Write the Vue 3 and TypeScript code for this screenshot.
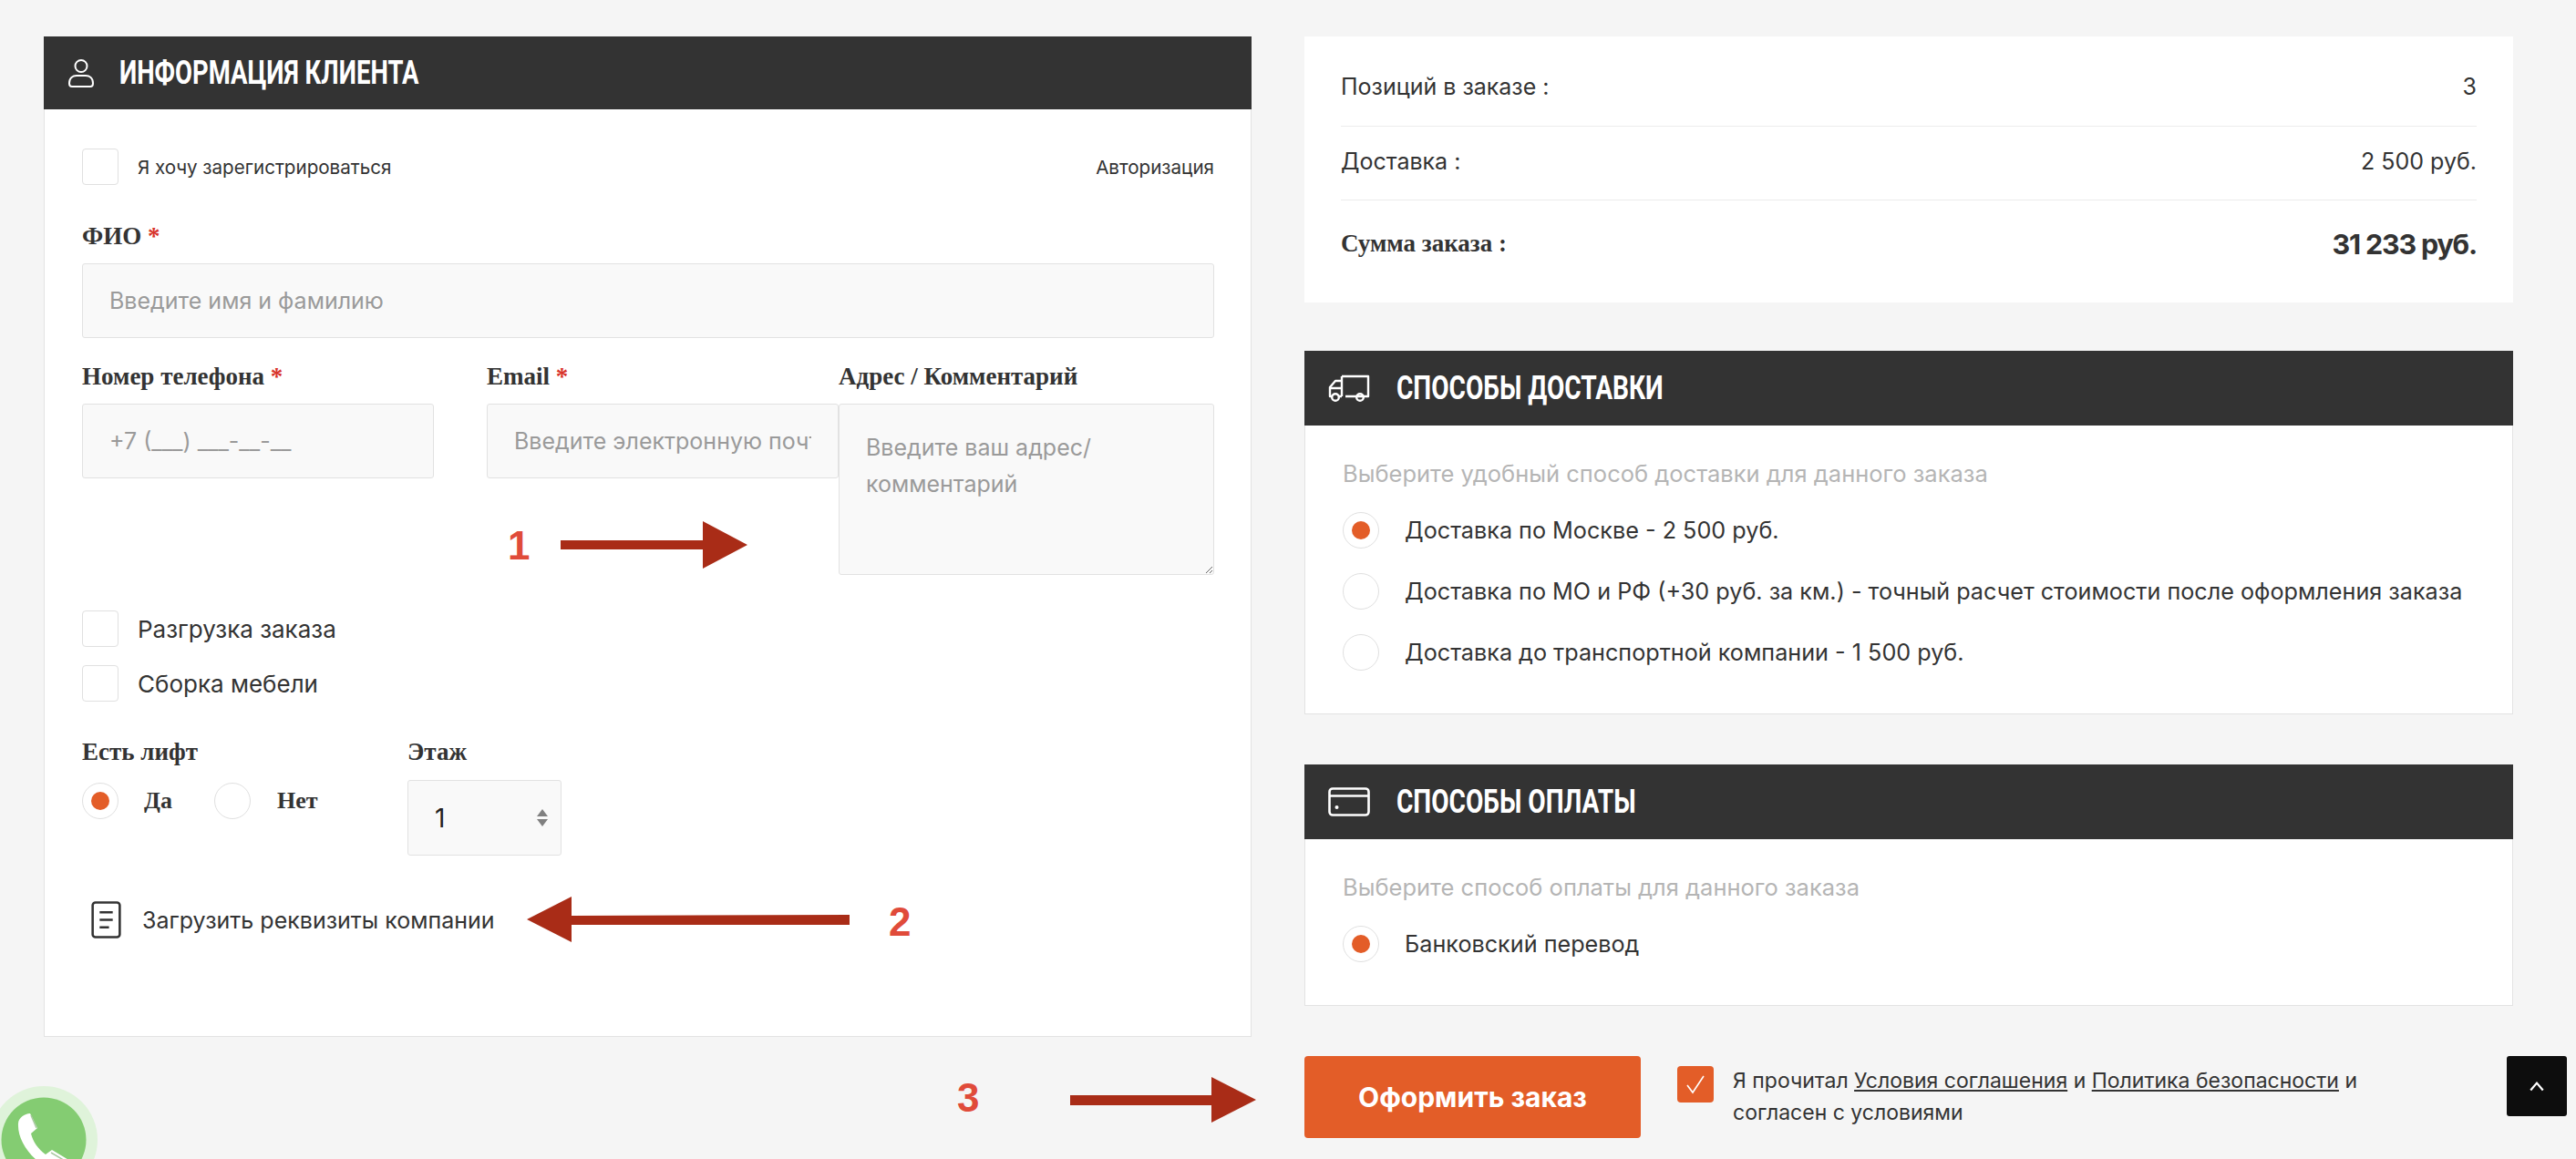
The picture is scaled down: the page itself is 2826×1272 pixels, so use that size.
<script setup lang="ts">
interface Opt { label: string; on: boolean }
const delivery: Opt[] = [
  { label: 'Доставка по Москве - 2 500 руб.', on: true },
  { label: 'Доставка по МО и РФ (+30 руб. за км.) - точный расчет стоимости после оформления заказа', on: false },
  { label: 'Доставка до транспортной компании - 1 500 руб.', on: false },
]
</script>

<template>
  <div class="page">
    <section class="col left">
      <header class="bar">
        <svg class="ico user" viewBox="0 0 30 32" fill="none" stroke="#fff" stroke-width="2">
          <circle cx="15" cy="8" r="6.5" />
          <path d="M2 27c0-6 4-8.500 8-8.500h10c4 0 8 2.500 8 8.500 0 2.500-1 3.500-3 3.500H5c-2 0-3-1-3-3.500z" />
        </svg>
        <h2>ИНФОРМАЦИЯ КЛИЕНТА</h2>
      </header>
      <div class="panel-body client">
        <div class="reg-row">
          <label class="check-line"><span class="box"></span><span class="small">Я хочу зарегистрироваться</span></label>
          <a class="small">Авторизация</a>
        </div>
        <label class="lbl fio">ФИО <i>*</i></label>
        <input class="field full" placeholder="Введите имя и фамилию" />
        <div class="three">
          <div class="cell">
            <label class="lbl">Номер телефона <i>*</i></label>
            <input class="field" placeholder="+7 (___) ___-__-__" />
          </div>
          <div class="cell">
            <label class="lbl">Email <i>*</i></label>
            <input class="field" placeholder="Введите электронную почту" />
          </div>
          <div class="cell">
            <label class="lbl">Адрес / Комментарий</label>
            <textarea class="field area" placeholder="Введите ваш адрес/ комментарий"></textarea>
          </div>
        </div>
        <div class="extras">
          <label class="check-line"><span class="box"></span><span>Разгрузка заказа</span></label>
          <label class="check-line"><span class="box"></span><span>Сборка мебели</span></label>
        </div>
        <div class="lift-row">
          <div class="lift">
            <div class="lbl">Есть лифт</div>
            <div class="lift-opts">
              <span class="radio on"></span><b>Да</b>
              <span class="radio"></span><b>Нет</b>
            </div>
          </div>
          <div class="floor">
            <div class="lbl">Этаж</div>
            <div class="number">
              <span>1</span>
              <span class="spin"><em class="up"></em><em class="down"></em></span>
            </div>
          </div>
        </div>
        <div class="upload">
          <svg class="doc" viewBox="0 0 32 40" fill="none" stroke="#333" stroke-width="2.500">
            <rect x="1.500" y="1.500" width="29" height="37" rx="3" />
            <path d="M9 12h14M9 20h14M9 28h10" />
          </svg>
          <span>Загрузить реквизиты компании</span>
        </div>
      </div>
    </section>

    <section class="col right">
      <div class="summary">
        <div class="sum-row first"><span>Позиций в заказе :</span><span>3</span></div>
        <div class="sum-row second"><span>Доставка :</span><span>2 500 руб.</span></div>
        <div class="sum-row total"><b class="serif">Сумма заказа :</b><b class="amount">31 233 руб.</b></div>
      </div>

      <header class="bar delivery-bar">
        <svg class="ico wide" viewBox="0 0 46 30" fill="none" stroke="#fff" stroke-width="2.400" stroke-linejoin="round">
          <path d="M15 2h29v22H19" />
          <path d="M15 2v22" />
          <path d="M15 7H8L2 14v10h2" />
          <path d="M3 15h12M15 24h-3" />
          <circle cx="8" cy="25" r="3.800" />
          <circle cx="35" cy="25" r="3.800" />
        </svg>
        <h2>СПОСОБЫ ДОСТАВКИ</h2>
      </header>
      <div class="panel-body method delivery-body">
        <p class="hint">Выберите удобный способ доставки для данного заказа</p>
        <div v-for="o in delivery" :key="o.label" class="opt">
          <span class="radio" :class="{ on: o.on }"></span>
          <span>{{ o.label }}</span>
        </div>
      </div>

      <header class="bar pay-bar">
        <svg class="ico wide" viewBox="0 0 46 32" fill="none" stroke="#fff" stroke-width="2.600">
          <rect x="1.500" y="1.500" width="43" height="29" rx="3.500" />
          <path d="M1.500 9.500h43" />
          <circle cx="9.500" cy="22" r="2" fill="#fff" stroke="none" />
        </svg>
        <h2>СПОСОБЫ ОПЛАТЫ</h2>
      </header>
      <div class="panel-body method pay-body">
        <p class="hint">Выберите способ оплаты для данного заказа</p>
        <div class="opt">
          <span class="radio on"></span>
          <span>Банковский перевод</span>
        </div>
      </div>

      <div class="footer">
        <button class="submit">Оформить заказ</button>
        <span class="tick">
          <svg viewBox="0 0 24 24" fill="none" stroke="#fff" stroke-width="1.600"><path d="M3 13l6 8L21 3" /></svg>
        </span>
        <p class="agree">Я прочитал <u>Условия соглашения</u> и <u>Политика безопасности</u> и согласен с условиями</p>
      </div>
    </section>

    <button class="to-top" aria-label="Наверх">
      <svg viewBox="0 0 16 10" fill="none" stroke="#fff" stroke-width="2"><path d="M2 9l6-7 6 7" /></svg>
    </button>

    <div class="phone">
      <svg viewBox="0 0 118 118">
        <circle cx="59" cy="59" r="59" fill="#dff3da" />
        <circle cx="59" cy="59" r="46.500" fill="#84cc72" />
        <path d="M31 41C31 35 38 30 44 30L52 46 45 52C47 61 53 69 61 75L68 70 88 82C80 92 70 92 60 88 42 76 30 58 31 41z" fill="#fff" />
        <path d="M45 32l6 14M67 73l17 10" stroke="#a9c9a2" stroke-width="1.500" fill="none" />
      </svg>
    </div>

    <span class="num n1">1</span>
    <svg class="arrow a1" viewBox="0 0 205 52"><path d="M0 21h156V0l49 26-49 26V31H0z" fill="#a92c17" /></svg>
    <span class="num n2">2</span>
    <svg class="arrow a2" viewBox="0 0 354 50"><path d="M354 20v11L49 31v19L0 25 49 0v21z" fill="#a92c17" /></svg>
    <span class="num n3">3</span>
    <svg class="arrow a3" viewBox="0 0 204 50"><path d="M0 20h155V0l49 25-49 25V31H0z" fill="#a92c17" /></svg>
  </div>
</template>

<style>
html, body { margin: 0; background: #f5f5f5; }
</style>

<style scoped>
.page {
  position: relative;
  box-sizing: border-box;
  width: 2826px;
  height: 1272px;
  overflow: hidden;
  display: flex;
  gap: 58px;
  padding: 40px 0 0 48px;
  background: #f5f5f5;
  color: #333;
  font-family: "Inter", "Noto Sans", sans-serif;
  font-size: 25px;
}
.col { width: 1325px; display: flex; flex-direction: column; }
.bar {
  height: 82px;
  flex: none;
  background: #333;
  display: flex;
  align-items: center;
  padding-left: 26px;
  box-sizing: border-box;
  color: #fff;
}
.left .bar { height: 80px; }
.bar h2 {
  margin: 0 0 0 29px;
  font: 700 36px/1 "Roboto", "Liberation Sans", sans-serif;
  white-space: nowrap;
  transform: scaleX(0.78);
  transform-origin: left center;
}
.left .bar h2 { margin-left: 27px; transform: scaleX(0.763); }
.ico { flex: none; display: block; }
.user { width: 30px; height: 33px; }
.wide { width: 46px; height: 32px; }
.panel-body {
  background: #fff;
  border: 1px solid #e3e3e3;
  border-top: 0;
  box-sizing: border-box;
  padding-left: 41px;
  padding-right: 40px;
}
.client { height: 1018px; padding-top: 43px; }
.reg-row { display: flex; justify-content: space-between; align-items: center; height: 40px; }
.check-line { display: flex; align-items: center; gap: 21px; height: 40px; }
.box {
  width: 40px;
  height: 40px;
  box-sizing: border-box;
  background: #fff;
  border: 1px solid #e0e0e0;
  border-radius: 4px;
  flex: none;
}
.small { font-size: 20.600px; }
.lbl {
  display: block;
  font: 700 27px/32px "Liberation Serif", serif;
  color: #333;
}
.lbl i { font-style: normal; color: #d8322a; }
.fio { margin-top: 40px; }
.field {
  display: block;
  box-sizing: border-box;
  width: 100%;
  height: 82px;
  padding: 0 29px;
  background: #f9f9f9;
  border: 1px solid #e2e2e2;
  border-radius: 3px;
  font: 25px "Inter", sans-serif;
  color: #333;
  outline: none;
}
.field::placeholder { color: #9a9a9a; opacity: 1; }
.full { margin-top: 14px; }
.three {
  display: grid;
  grid-template-columns: 386px 386px 354px;
  column-gap: 58px;
  margin-top: 26px;
}
.three .cell:nth-child(3) { margin-left: -58px; width: 412px; }
.cell .lbl { margin-bottom: 14px; }
.area {
  height: 188px;
  padding: 27px 29px;
  line-height: 40px;
  resize: both;
  width: 412px;
}
.extras { margin-top: 39px; display: flex; flex-direction: column; gap: 20px; font-size: 26px; }
.lift-row { display: flex; margin-top: 39px; }
.lift { width: 357px; }
.lift-opts { display: flex; align-items: center; margin-top: 18px; height: 40px; }
.lift-opts b { font: 700 26px "Liberation Serif", serif; margin-left: 28px; width: 77px; }
.lift-opts b:last-child { margin-left: 29px; }
.radio {
  width: 40px;
  height: 40px;
  flex: none;
  box-sizing: border-box;
  border-radius: 50%;
  background: #fff;
  border: 1px solid #e0e0e0;
  display: inline-flex;
  align-items: center;
  justify-content: center;
}
.radio.on::after {
  content: "";
  width: 20px;
  height: 20px;
  border-radius: 50%;
  background: #e35d28;
}
.number {
  margin-top: 15px;
  width: 169px;
  height: 83px;
  box-sizing: border-box;
  background: #f9f9f9;
  border: 1px solid #e2e2e2;
  border-radius: 3px;
  display: flex;
  align-items: center;
  justify-content: space-between;
  padding: 0 14px 0 29px;
  font: 28px "Inter", sans-serif;
  color: #222;
}
.spin { display: flex; flex-direction: column; gap: 3px; }
.spin em { display: block; width: 0; height: 0; border-left: 6px solid transparent; border-right: 6px solid transparent; }
.up { border-bottom: 8px solid #808080; }
.down { border-top: 8px solid #808080; }
.upload { display: flex; align-items: center; gap: 23px; margin: 50px 0 0 10px; }
.doc { width: 33px; height: 41px; flex: none; }

.right { width: 1326px; }
.summary { background: #fff; height: 292px; padding: 0 40px; box-sizing: border-box; flex: none; margin-bottom: 53px; }
.sum-row { display: flex; justify-content: space-between; align-items: center; }
.first { height: 86px; padding-top: 12px; border-bottom: 1px solid #ececec; }
.second { height: 76px; padding-bottom: 4px; border-bottom: 1px solid #ececec; }
.total { height: 94px; }
.serif { font: 700 27px "Liberation Serif", serif; }
.amount { font-size: 30.500px; font-weight: 700; letter-spacing: -1.200px; }
.method { padding-top: 33px; }
.delivery-body { height: 317px; margin-bottom: 55px; }
.pay-body { height: 183px; }
.hint { margin: 0 0 22px; color: #b5b5b5; line-height: 40px; font-size: 25.500px; }
.opt { display: flex; align-items: center; gap: 28px; height: 40px; margin-bottom: 27px; font-size: 25.200px; }
.footer { display: flex; align-items: flex-start; margin-top: 55px; }
.submit {
  width: 369px;
  height: 90px;
  flex: none;
  background: #e35d28;
  color: #fff;
  border: 0;
  border-radius: 4px;
  font: 700 30px "Inter", sans-serif;
}
.tick {
  width: 40px;
  height: 40px;
  flex: none;
  margin: 11px 21px 0 40px;
  background: #e35d28;
  border-radius: 4px;
  display: flex;
  align-items: center;
  justify-content: center;
}
.tick svg { width: 24px; height: 24px; }
.agree { margin: 10px 0 0; width: 720px; font-size: 23px; line-height: 35px; }
.to-top {
  position: absolute;
  left: 2750px;
  top: 1159px;
  width: 66px;
  height: 66px;
  background: #0d0d0d;
  border: 0;
  border-radius: 3px;
  display: flex;
  align-items: center;
  justify-content: center;
}
.to-top svg { width: 18px; height: 12px; }
.phone { position: absolute; left: -11px; top: 1192px; width: 118px; height: 118px; }
.phone svg { display: block; width: 118px; height: 118px; }
.num {
  position: absolute;
  font: 700 44px/1 "Liberation Sans", sans-serif;
  color: #e04b3a;
}
.n1 { left: 557px; top: 577px; }
.n2 { left: 975px; top: 990px; }
.n3 { left: 1050px; top: 1183px; }
.arrow { position: absolute; display: block; }
.a1 { left: 615px; top: 572px; width: 205px; height: 52px; }
.a2 { left: 578px; top: 984px; width: 354px; height: 50px; }
.a3 { left: 1174px; top: 1182px; width: 204px; height: 50px; }
</style>
